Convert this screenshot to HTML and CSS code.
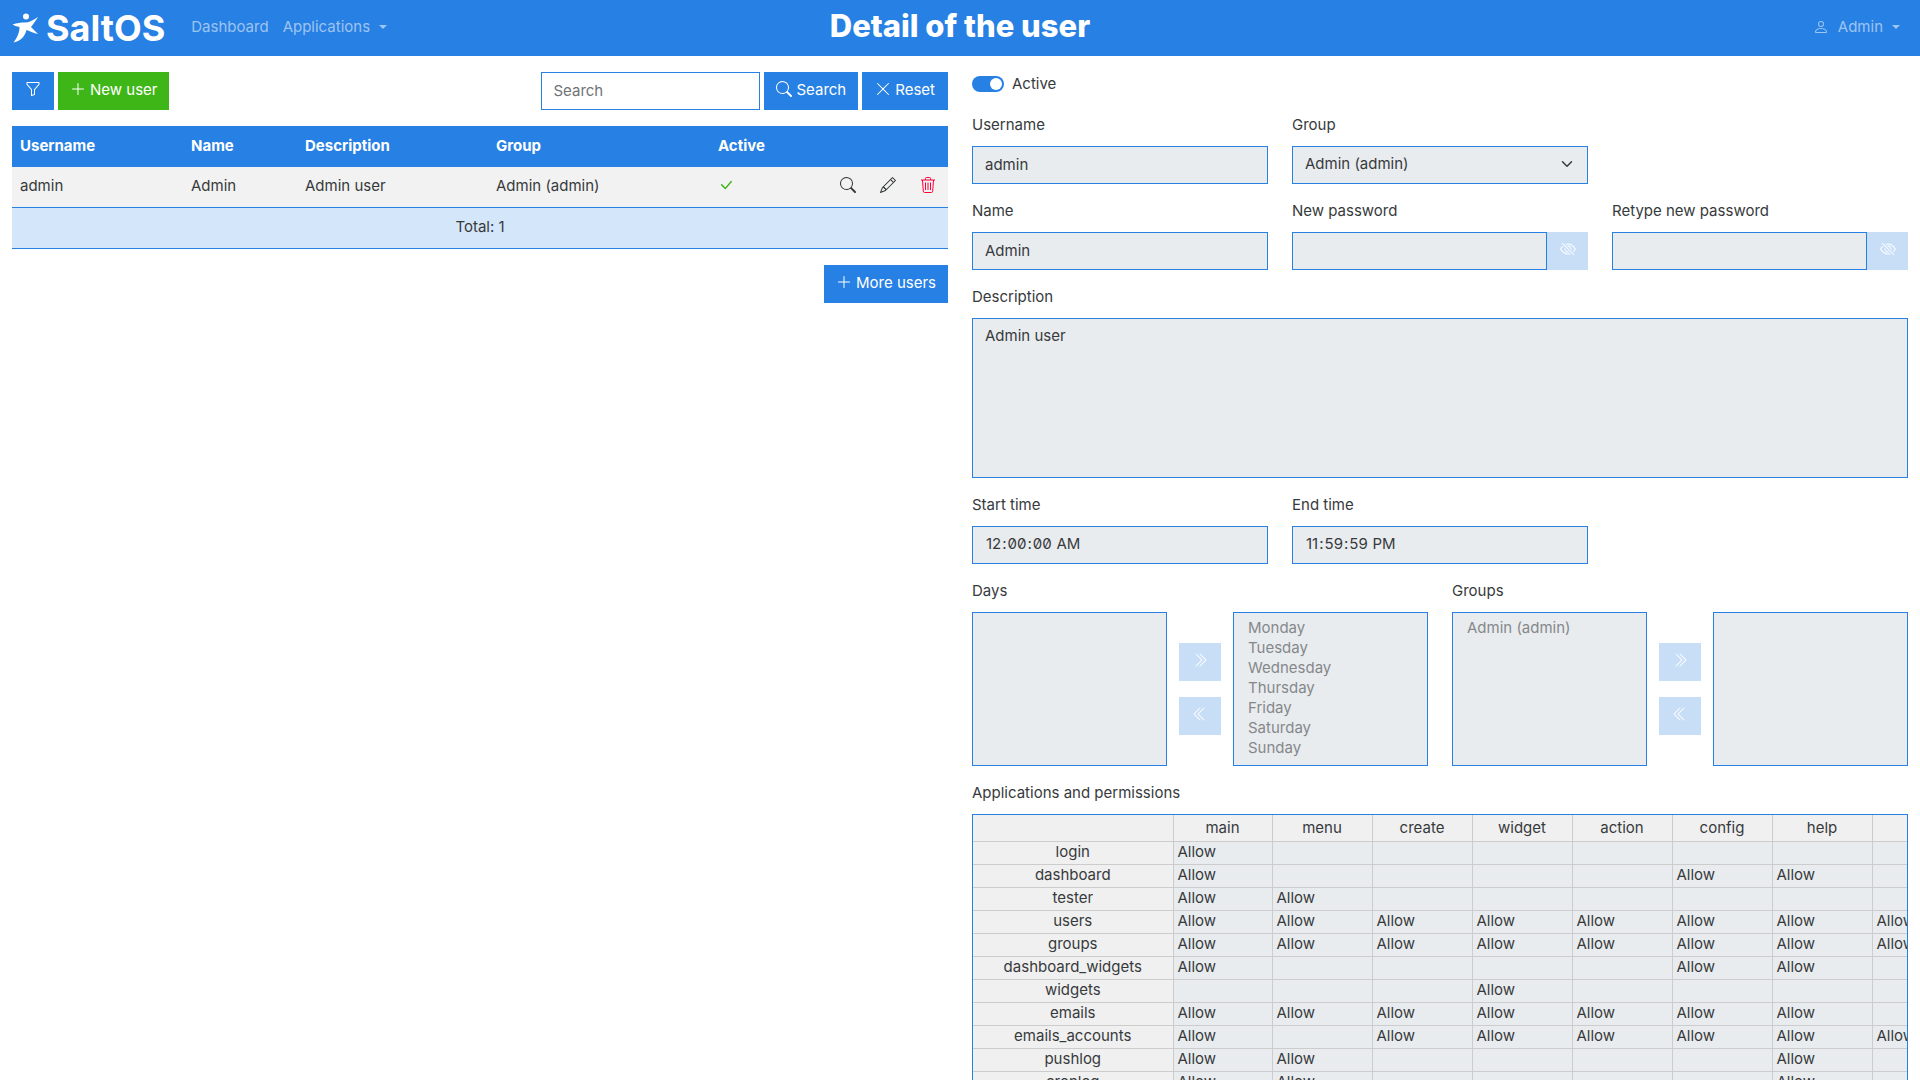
FILE: index.html
```html
<!DOCTYPE html>
<html lang="en">
<head>
    <meta charset="UTF-8">
    <meta name="viewport" content="width=device-width, initial-scale=1.0">
    <title>Detail of the user</title>
    <link rel="stylesheet" href="styles.css">
</head>
<body>

<svg class="sprite" xmlns="http://www.w3.org/2000/svg">
    <symbol id="i-funnel" viewBox="0 0 16 16"><path d="M1.5 1.5A.5.5 0 0 1 2 1h12a.5.5 0 0 1 .5.5v2a.5.5 0 0 1-.128.334L10 8.692V13.5a.5.5 0 0 1-.342.474l-3 1A.5.5 0 0 1 6 14.5V8.692L1.628 3.834A.5.5 0 0 1 1.5 3.5v-2zm1 .5v1.308l4.372 4.858A.5.5 0 0 1 7 8.5v5.306l2-.666V8.5a.5.5 0 0 1 .128-.334L13.5 3.308V2h-11z"/></symbol>
    <symbol id="i-plus" viewBox="0 0 16 16"><path d="M8 2a.5.5 0 0 1 .5.5v5h5a.5.5 0 0 1 0 1h-5v5a.5.5 0 0 1-1 0v-5h-5a.5.5 0 0 1 0-1h5v-5A.5.5 0 0 1 8 2Z"/></symbol>
    <symbol id="i-search" viewBox="0 0 16 16"><path d="M11.742 10.344a6.5 6.5 0 1 0-1.397 1.398h-.001c.03.04.062.078.098.115l3.85 3.85a1 1 0 0 0 1.415-1.414l-3.85-3.85a1.007 1.007 0 0 0-.115-.1zM12 6.5a5.5 5.5 0 1 1-11 0 5.5 5.5 0 0 1 11 0z"/></symbol>
    <symbol id="i-x" viewBox="0 0 16 16"><path d="M2.146 2.854a.5.5 0 1 1 .708-.708L8 7.293l5.146-5.147a.5.5 0 0 1 .708.708L8.707 8l5.147 5.146a.5.5 0 0 1-.708.708L8 8.707l-5.146 5.147a.5.5 0 0 1-.708-.708L7.293 8 2.146 2.854Z"/></symbol>
    <symbol id="i-check" viewBox="0 0 16 16"><path d="M12.736 3.97a.733.733 0 0 1 1.047 0c.286.289.29.756.01 1.05L7.88 12.01a.733.733 0 0 1-1.065.02L3.217 8.384a.757.757 0 0 1 0-1.06.733.733 0 0 1 1.047 0l3.052 3.093 5.4-6.425a.247.247 0 0 1 .02-.022Z"/></symbol>
    <symbol id="i-pencil" viewBox="0 0 16 16"><path d="M12.146.146a.5.5 0 0 1 .708 0l3 3a.5.5 0 0 1 0 .708l-10 10a.5.5 0 0 1-.168.11l-5 2a.5.5 0 0 1-.65-.65l2-5a.5.5 0 0 1 .11-.168l10-10zM11.207 2.5 13.5 4.793 14.793 3.5 12.5 1.207 11.207 2.5zm1.586 3L10.5 3.207 4 9.707V10h.5a.5.5 0 0 1 .5.5v.5h.5a.5.5 0 0 1 .5.5v.5h.293l6.5-6.5zm-9.761 5.175-.106.106-1.528 3.821 3.821-1.528.106-.106A.5.5 0 0 1 5 12.5V12h-.5a.5.5 0 0 1-.5-.5V11h-.5a.5.5 0 0 1-.468-.325z"/></symbol>
    <symbol id="i-trash" viewBox="0 0 16 16"><path fill="none" stroke="currentColor" d="M1 3h14M5.500 3V1.500a1 1 0 0 1 1-1h3a1 1 0 0 1 1 1V3M2.500 3l.8 11.200a1.400 1.400 0 0 0 1.400 1.300h6.600a1.400 1.400 0 0 0 1.400-1.300L13.500 3M5.500 5.500v7.500M8 5.500v7.500M10.500 5.500v7.500"/></symbol>
    <symbol id="i-eye-slash" viewBox="0 0 16 16"><path d="M13.359 11.238C15.06 9.72 16 8 16 8s-3-5.5-8-5.5a7.028 7.028 0 0 0-2.79.588l.77.771A5.944 5.944 0 0 1 8 3.5c2.12 0 3.879 1.168 5.168 2.457A13.134 13.134 0 0 1 14.828 8c-.058.087-.122.183-.195.288-.335.48-.83 1.12-1.465 1.755-.165.165-.337.328-.517.486l.708.709z"/><path d="M11.297 9.176a3.5 3.5 0 0 0-4.474-4.474l.823.823a2.5 2.5 0 0 1 2.829 2.829l.822.822zm-2.943 1.299.822.822a3.5 3.5 0 0 1-4.474-4.474l.823.823a2.5 2.5 0 0 0 2.829 2.829z"/><path d="M3.35 5.47c-.18.16-.353.322-.518.487A13.134 13.134 0 0 0 1.172 8l.195.288c.335.48.83 1.12 1.465 1.755C4.121 11.332 5.881 12.5 8 12.5c.716 0 1.39-.133 2.02-.36l.77.772A7.029 7.029 0 0 1 8 13.5C3 13.5 0 8 0 8s.939-1.721 2.641-3.238l.708.709zm10.296 8.884-12-12 .708-.708 12 12-.708.708z"/></symbol>
    <symbol id="i-double-right" viewBox="0 0 16 16"><path d="M3.646 1.646a.5.5 0 0 1 .708 0l6 6a.5.5 0 0 1 0 .708l-6 6a.5.5 0 0 1-.708-.708L9.293 8 3.646 2.354a.5.5 0 0 1 0-.708z"/><path d="M7.646 1.646a.5.5 0 0 1 .708 0l6 6a.5.5 0 0 1 0 .708l-6 6a.5.5 0 0 1-.708-.708L13.293 8 7.646 2.354a.5.5 0 0 1 0-.708z"/></symbol>
    <symbol id="i-double-left" viewBox="0 0 16 16"><path d="M8.354 1.646a.5.5 0 0 1 0 .708L2.707 8l5.647 5.646a.5.5 0 0 1-.708.708l-6-6a.5.5 0 0 1 0-.708l6-6a.5.5 0 0 1 .708 0z"/><path d="M12.354 1.646a.5.5 0 0 1 0 .708L6.707 8l5.647 5.646a.5.5 0 0 1-.708.708l-6-6a.5.5 0 0 1 0-.708l6-6a.5.5 0 0 1 .708 0z"/></symbol>
    <symbol id="i-person" viewBox="0 0 16 16"><path d="M8 8a3 3 0 1 0 0-6 3 3 0 0 0 0 6Zm2-3a2 2 0 1 1-4 0 2 2 0 0 1 4 0Zm4 8c0 1-1 1-1 1H3s-1 0-1-1 1-4 6-4 6 3 6 4Zm-1-.004c-.001-.246-.154-.986-.832-1.664C11.516 10.68 10.289 10 8 10c-2.29 0-3.516.68-4.168 1.332-.678.678-.83 1.418-.832 1.664h10Z"/></symbol>
    <symbol id="i-chevron-down" viewBox="0 0 16 16"><path fill="none" stroke="currentColor" stroke-width="2" stroke-linecap="round" stroke-linejoin="round" d="m2 5 6 6 6-6"/></symbol>
</svg>

<header class="navbar">
    <div class="nav-left">
        <a class="brand">
            <svg class="brand-logo" viewBox="0 0 27 30"><circle cx="14" cy="3.500" r="3"/><path d="M.5 11.500C5 10 9 9.500 13 9.500c4 0 8-2 13-5.500-2.500 4-5 7.500-7 10l7 7c-4-1-8-2.500-11.500-4C13 23 9 28 1.500 29.500 5 25 7.500 20 7.500 14c-2-.5-4.500-1-7-2.500Z"/></svg>
            <span>SaltOS</span>
        </a>
        <a class="nav-link">Dashboard</a>
        <a class="nav-link">Applications<span class="caret"></span></a>
    </div>
    <h1 class="page-title">Detail of the user</h1>
    <div class="nav-right">
        <a class="nav-link"><svg class="icon user-icon"><use href="#i-person"/></svg>Admin<span class="caret"></span></a>
    </div>
</header>

<main class="page">
    <section class="list-col">
        <div class="toolbar">
            <button class="btn btn-icon"><svg class="icon"><use href="#i-funnel"/></svg></button>
            <button class="btn btn-green"><svg class="icon"><use href="#i-plus"/></svg>New user</button>
            <input class="search-input" type="text" placeholder="Search">
            <button class="btn"><svg class="icon"><use href="#i-search"/></svg>Search</button>
            <button class="btn btn-reset"><svg class="icon"><use href="#i-x"/></svg>Reset</button>
        </div>

        <table class="users-table">
            <colgroup>
                <col class="c-username"><col class="c-name"><col class="c-desc"><col class="c-group"><col class="c-active"><col>
            </colgroup>
            <thead>
                <tr>
                    <th>Username</th>
                    <th>Name</th>
                    <th>Description</th>
                    <th>Group</th>
                    <th>Active</th>
                    <th></th>
                </tr>
            </thead>
            <tbody>
                <tr>
                    <td>admin</td>
                    <td>Admin</td>
                    <td>Admin user</td>
                    <td>Admin (admin)</td>
                    <td><svg class="icon icon-check"><use href="#i-check"/></svg></td>
                    <td>
                        <div class="row-actions">
                            <svg class="icon"><use href="#i-search"/></svg>
                            <svg class="icon"><use href="#i-pencil"/></svg>
                            <svg class="icon icon-danger"><use href="#i-trash"/></svg>
                        </div>
                    </td>
                </tr>
            </tbody>
            <tfoot>
                <tr><td colspan="6">Total: 1</td></tr>
            </tfoot>
        </table>

        <div class="more-row">
            <button class="btn"><svg class="icon"><use href="#i-plus"/></svg>More users</button>
        </div>
    </section>

    <section class="form-col">
        <div class="active-row span-3">
            <span class="switch"><span class="knob"></span></span>
            <span>Active</span>
        </div>

        <div class="field">
            <label>Username</label>
            <input class="control" type="text" value="admin" readonly>
        </div>
        <div class="field">
            <label>Group</label>
            <div class="control select-box">Admin (admin)<svg class="icon chevron"><use href="#i-chevron-down"/></svg></div>
        </div>
        <div></div>

        <div class="field">
            <label>Name</label>
            <input class="control" type="text" value="Admin" readonly>
        </div>
        <div class="field">
            <label>New password</label>
            <div class="input-group">
                <input class="control" type="password" readonly>
                <button class="btn btn-off btn-eye"><svg class="icon"><use href="#i-eye-slash"/></svg></button>
            </div>
        </div>
        <div class="field">
            <label>Retype new password</label>
            <div class="input-group">
                <input class="control" type="password" readonly>
                <button class="btn btn-off btn-eye"><svg class="icon"><use href="#i-eye-slash"/></svg></button>
            </div>
        </div>

        <div class="field span-3">
            <label>Description</label>
            <textarea class="control description" readonly>Admin user</textarea>
        </div>

        <div class="field">
            <label>Start time</label>
            <input class="control time-input" type="time" step="1" value="00:00:00" readonly>
        </div>
        <div class="field">
            <label>End time</label>
            <input class="control time-input" type="time" step="1" value="23:59:59" readonly>
        </div>
        <div></div>

        <div class="multi-row span-3">
            <div class="field">
                <label>Days</label>
                <div class="multi">
                    <div class="list-box"></div>
                    <div class="multi-btns">
                        <button class="btn btn-off btn-icon"><svg class="icon"><use href="#i-double-right"/></svg></button>
                        <button class="btn btn-off btn-icon"><svg class="icon"><use href="#i-double-left"/></svg></button>
                    </div>
                    <div class="list-box">
                        <div>Monday</div>
                        <div>Tuesday</div>
                        <div>Wednesday</div>
                        <div>Thursday</div>
                        <div>Friday</div>
                        <div>Saturday</div>
                        <div>Sunday</div>
                    </div>
                </div>
            </div>
            <div class="field">
                <label>Groups</label>
                <div class="multi">
                    <div class="list-box">
                        <div>Admin (admin)</div>
                    </div>
                    <div class="multi-btns">
                        <button class="btn btn-off btn-icon"><svg class="icon"><use href="#i-double-right"/></svg></button>
                        <button class="btn btn-off btn-icon"><svg class="icon"><use href="#i-double-left"/></svg></button>
                    </div>
                    <div class="list-box"></div>
                </div>
            </div>
        </div>

        <div class="field span-3">
            <label>Applications and permissions</label>
            <div class="perm-wrap">
                <table class="perm-table">
                    <thead>
                        <tr><th></th><th>main</th><th>menu</th><th>create</th><th>widget</th><th>action</th><th>config</th><th>help</th><th></th></tr>
                    </thead>
                    <tbody>
                        <tr><th>login</th><td>Allow</td><td></td><td></td><td></td><td></td><td></td><td></td><td></td></tr>
                        <tr><th>dashboard</th><td>Allow</td><td></td><td></td><td></td><td></td><td>Allow</td><td>Allow</td><td></td></tr>
                        <tr><th>tester</th><td>Allow</td><td>Allow</td><td></td><td></td><td></td><td></td><td></td><td></td></tr>
                        <tr><th>users</th><td>Allow</td><td>Allow</td><td>Allow</td><td>Allow</td><td>Allow</td><td>Allow</td><td>Allow</td><td>Allow</td></tr>
                        <tr><th>groups</th><td>Allow</td><td>Allow</td><td>Allow</td><td>Allow</td><td>Allow</td><td>Allow</td><td>Allow</td><td>Allow</td></tr>
                        <tr><th>dashboard_widgets</th><td>Allow</td><td></td><td></td><td></td><td></td><td>Allow</td><td>Allow</td><td></td></tr>
                        <tr><th>widgets</th><td></td><td></td><td></td><td>Allow</td><td></td><td></td><td></td><td></td></tr>
                        <tr><th>emails</th><td>Allow</td><td>Allow</td><td>Allow</td><td>Allow</td><td>Allow</td><td>Allow</td><td>Allow</td><td></td></tr>
                        <tr><th>emails_accounts</th><td>Allow</td><td></td><td>Allow</td><td>Allow</td><td>Allow</td><td>Allow</td><td>Allow</td><td>Allow</td></tr>
                        <tr><th>pushlog</th><td>Allow</td><td>Allow</td><td></td><td></td><td></td><td></td><td>Allow</td><td></td></tr>
                        <tr><th>cronlog</th><td>Allow</td><td>Allow</td><td></td><td></td><td></td><td></td><td>Allow</td><td></td></tr>
                    </tbody>
                </table>
            </div>
        </div>
    </section>
</main>

</body>
</html>
```

FILE: styles.css
```css
* {
    box-sizing: border-box;
}
html, body {
    height: 100%;
    overflow: hidden;
}
body {
    margin: 0;
    font-family: Inter, "Liberation Sans", sans-serif;
    font-size: 15px;
    line-height: 22px;
    color: #373a3c;
    background-color: #fff;
}
.sprite {
    display: none;
}
.icon {
    width: 16px;
    height: 16px;
    fill: currentColor;
    flex: none;
}

/* top bar */
.navbar {
    display: grid;
    grid-template-columns: 1fr auto 1fr;
    align-items: center;
    height: 56px;
    padding: 0 12px;
    background-color: #2780e3;
    color: #fff;
}
.nav-left {
    display: flex;
    align-items: center;
}
.nav-right {
    display: flex;
    justify-content: flex-end;
    padding-right: 8px;
}
.brand {
    display: flex;
    align-items: center;
    gap: 7px;
    margin-right: 26px;
    font-size: 36px;
    line-height: 40px;
    font-weight: 700;
}
.brand-logo {
    width: 27px;
    height: 30px;
    fill: #fff;
}
.nav-link {
    display: flex;
    align-items: center;
    margin-right: 14px;
    padding-bottom: 2px;
    color: rgba(255, 255, 255, 0.55);
}
.nav-right .nav-link {
    margin-right: 0;
}
.caret {
    width: 0;
    height: 0;
    margin-left: 9px;
    border-top: 4px solid currentColor;
    border-left: 4px solid transparent;
    border-right: 4px solid transparent;
}
.user-icon {
    margin-right: 9px;
}
.page-title {
    margin: 0;
    padding-bottom: 4px;
    font-size: 31px;
    line-height: 36px;
    font-weight: 800;
}

/* page columns */
.page {
    display: grid;
    grid-template-columns: 936px 936px;
    gap: 24px;
    padding: 16px 12px 0;
}
.btn {
    display: inline-flex;
    align-items: center;
    justify-content: center;
    gap: 4px;
    height: 38px;
    padding: 0 12px 2px;
    font: inherit;
    color: #fff;
    background-color: #2780e3;
    border: none;
    border-radius: 0;
}
.btn .icon {
    margin-top: -2px;
}
.btn-icon {
    width: 42px;
    padding: 0 0 2px;
}
.btn-reset {
    padding: 0 13px 2px;
}
.btn-green {
    background-color: #3fb618;
}
.btn-off {
    opacity: 0.25;
}

/* left column */
.toolbar {
    display: flex;
    gap: 4px;
    margin-bottom: 16px;
}
.search-input {
    width: 219px;
    height: 38px;
    margin-left: auto;
    padding: 0 11px 2px;
    font: inherit;
    color: #373a3c;
    border: 1px solid #2780e3;
    border-radius: 0;
}
.search-input::placeholder {
    color: #6f7376;
}
.users-table {
    width: 100%;
    table-layout: fixed;
    border-collapse: separate;
    border-spacing: 0;
}
.c-username { width: 171px; }
.c-name { width: 114px; }
.c-desc { width: 191px; }
.c-group { width: 222px; }
.c-active { width: 120px; }
.users-table th, .users-table td {
    height: 41px;
    padding: 0 8px 2px;
    text-align: left;
}
.users-table th {
    color: #fff;
    font-weight: 700;
    background-color: #2780e3;
}
.users-table td {
    background-color: #f2f2f2;
    border-bottom: 1px solid #2780e3;
}
.users-table tfoot td {
    text-align: center;
    background-color: #d4e6f9;
}
.users-table .icon {
    margin-top: -2px;
}
.icon-check {
    display: block;
    color: #3fb618;
}
.icon-danger {
    color: #ff0039;
}
.row-actions {
    display: flex;
    justify-content: flex-end;
    gap: 24px;
    padding-right: 4px;
}
.more-row {
    display: flex;
    justify-content: flex-end;
    margin-top: 16px;
}

/* right column */
.form-col {
    display: grid;
    grid-template-columns: repeat(3, 296px);
    gap: 16px 24px;
    align-content: start;
}
.span-3 {
    grid-column: span 3;
}
.active-row {
    display: flex;
    align-items: center;
    gap: 8px;
    height: 24px;
    margin-bottom: 2px;
}
.active-row span:last-child {
    margin-top: -1px;
}
.switch {
    display: flex;
    justify-content: flex-end;
    align-items: center;
    width: 32px;
    height: 16px;
    padding: 0 2px;
    background-color: #2780e3;
    border-radius: 8px;
}
.knob {
    width: 12px;
    height: 12px;
    background-color: #fff;
    border-radius: 50%;
}
.field {
    min-width: 0;
}
.field label {
    display: block;
    height: 24px;
    margin-bottom: 8px;
    line-height: 22px;
}
.control {
    display: block;
    width: 100%;
    height: 38px;
    padding: 0 12px 2px;
    font: inherit;
    color: #373a3c;
    background-color: #e9ecef;
    border: 1px solid #2780e3;
    border-radius: 0;
    outline: none;
}
.control::-webkit-calendar-picker-indicator {
    display: none;
}
.time-input {
    font-feature-settings: "zero";
}
.select-box {
    display: flex;
    align-items: center;
    justify-content: space-between;
}
.chevron {
    width: 12px;
    height: 12px;
    margin-right: 2px;
}
.input-group {
    display: flex;
}
.input-group .control {
    flex: 1;
    min-width: 0;
}
.btn-eye {
    width: 41px;
    flex: none;
    padding: 0 0 2px;
}
.description {
    height: 160px;
    padding: 6px 12px;
    resize: none;
}
.multi-row {
    display: grid;
    grid-template-columns: 456px 456px;
    gap: 24px;
}
.multi {
    display: grid;
    grid-template-columns: 195px 42px 195px;
    gap: 12px;
}
.multi-btns {
    display: flex;
    flex-direction: column;
    justify-content: center;
    gap: 16px;
}
.list-box {
    height: 154px;
    padding: 5px 14px;
    line-height: 20px;
    color: #85888b;
    background-color: #e9ecef;
    border: 1px solid #2780e3;
}

/* permissions grid, clipped by the bottom of the window */
.perm-wrap {
    height: 300px;
    overflow: hidden;
    border: 1px solid #2780e3;
}
.perm-table {
    width: 999px;
    table-layout: fixed;
    border-collapse: collapse;
}
.perm-table th, .perm-table td {
    width: 100px;
    height: 23px;
    padding: 0 4px;
    border: 1px solid #ccc;
    overflow: hidden;
    white-space: nowrap;
}
.perm-table th:first-child {
    width: 200px;
    border-left: none;
}
.perm-table th:nth-child(2) {
    width: 99px;
}
.perm-table tbody th, .perm-table td {
    padding-bottom: 2px;
    line-height: 20px;
}
.perm-table th {
    font-weight: 400;
    text-align: center;
    background-color: #f0f0f0;
}
.perm-table thead th {
    height: 26px;
    border-top: none;
}
.perm-table td {
    background-color: #e9ecef;
}
```
